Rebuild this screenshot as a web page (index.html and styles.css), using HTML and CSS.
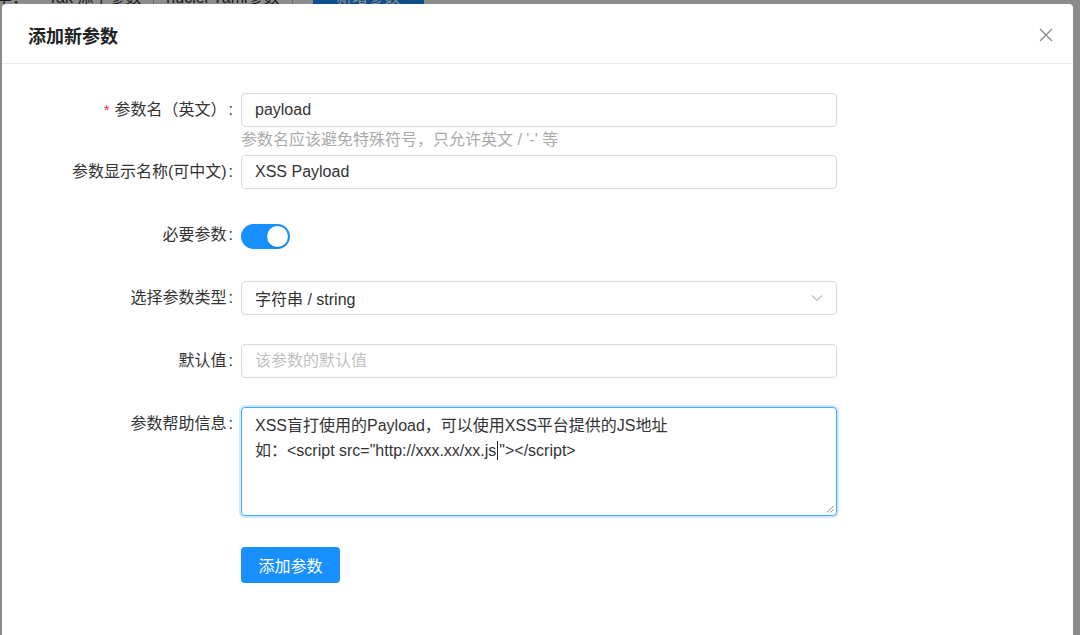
FILE: index.html
```html
<!DOCTYPE html>
<html lang="zh-CN">
<head>
    <meta charset="UTF-8">
    <meta name="viewport" content="width=device-width, initial-scale=1.0">
    <title>添加新参数</title>
    <link rel="stylesheet" href="styles.css">
</head>
<body>
    <div class="page">
        <div class="page-tabs">
            <span class="tab-lead">羊：</span>
            <span class="tab">Tak 添个参数</span>
            <span class="tab">nuclei Yaml参数</span>
            <span class="tab-btn">新增参数</span>
        </div>
    </div>

    <div class="mask"></div>

    <div class="modal">
        <div class="modal-header">
            <div class="modal-title">添加新参数</div>
            <button class="modal-close" type="button" aria-label="关闭">
                <svg width="14" height="14" viewBox="0 0 14 14">
                    <path d="M1 1 L13 13 M13 1 L1 13" stroke="#8c8c8c" stroke-width="1.4" fill="none"/>
                </svg>
            </button>
        </div>

        <div class="modal-body">
            <form class="param-form">
                <div class="form-item has-help">
                    <label class="form-label required">参数名（英文）</label>
                    <div class="form-control">
                        <input class="input" type="text" value="payload">
                        <div class="form-help">参数名应该避免特殊符号，只允许英文 / '-' 等</div>
                    </div>
                </div>

                <div class="form-item">
                    <label class="form-label">参数显示名称(可中文)</label>
                    <div class="form-control">
                        <input class="input" type="text" value="XSS Payload">
                    </div>
                </div>

                <div class="form-item switch-item">
                    <label class="form-label">必要参数</label>
                    <div class="form-control">
                        <span class="switch is-on"><span class="switch-knob"></span></span>
                    </div>
                </div>

                <div class="form-item">
                    <label class="form-label">选择参数类型</label>
                    <div class="form-control">
                        <div class="select">
                            <span class="select-value">字符串 / string</span>
                            <svg class="select-arrow" width="12" height="8" viewBox="0 0 12 8">
                                <polyline points="1,1.5 6,6.5 11,1.5" stroke="#bfbfbf" stroke-width="1.2" fill="none"/>
                            </svg>
                        </div>
                    </div>
                </div>

                <div class="form-item">
                    <label class="form-label">默认值</label>
                    <div class="form-control">
                        <input class="input" type="text" placeholder="该参数的默认值">
                    </div>
                </div>

                <div class="form-item">
                    <label class="form-label">参数帮助信息</label>
                    <div class="form-control">
                        <div class="textarea is-focused">
                            <div>XSS盲打使用的Payload，可以使用XSS平台提供的JS地址</div>
                            <div>如：&lt;script src="http://xxx.xx/xx.js<span class="caret"></span>"&gt;&lt;/script&gt;</div>
                            <svg class="resize-grip" width="8" height="8" viewBox="0 0 8 8">
                                <path d="M7.5 1 L1 7.5 M7.5 4.5 L4.5 7.5" stroke="#888" stroke-width="1" fill="none"/>
                            </svg>
                        </div>
                    </div>
                </div>

                <div class="form-item form-actions">
                    <div class="form-control">
                        <button class="btn-primary" type="button">添加参数</button>
                    </div>
                </div>
            </form>
        </div>
    </div>
</body>
</html>
```

FILE: styles.css
```css
* {
    margin: 0;
    padding: 0;
    box-sizing: border-box;
}

body {
    font-family: "Liberation Sans", "Noto Sans CJK SC", sans-serif;
    background: #fff;
    color: #333;
    height: 635px;
    overflow: hidden;
}

/* page behind the dialog, only its bottom edge peeks out */
.page-tabs {
    display: flex;
    align-items: center;
    height: 20px;
    margin-top: -14px;
    font-size: 16px;
    color: #333;
    white-space: nowrap;
}

.tab-lead {
    width: 52px;
    margin-left: -4px;
}

.tab {
    padding-right: 12px;
    margin-right: 12px;
    border-right: 1px solid #bbb;
}

.tab-btn {
    display: flex;
    align-items: center;
    justify-content: center;
    width: 111px;
    height: 28px;
    margin-left: 8px;
    background: #1890ff;
    color: #fff;
    border-radius: 4px;
}

.mask {
    position: fixed;
    top: 0;
    left: 0;
    right: 0;
    bottom: 0;
    background: rgba(0, 0, 0, 0.45);
}

.modal {
    position: absolute;
    top: 4px;
    left: 2px;
    width: 1071px;
    height: 700px;
    background: #fff;
    border-radius: 4px;
}

.modal-header {
    height: 60px;
    padding: 2px 20px 0 26px;
    display: flex;
    align-items: center;
    justify-content: space-between;
    border-bottom: 1px solid #ebebeb;
}

.modal-title {
    font-size: 18px;
    font-weight: 600;
    color: #222;
}

.modal-close {
    display: flex;
    border: none;
    background: none;
    cursor: pointer;
}

.modal-body {
    padding: 29px 24px 24px;
}

.form-item {
    display: flex;
    margin-bottom: 29px;
}

.form-item.has-help {
    margin-bottom: 4px;
}

.form-label {
    width: 215px;
    flex-shrink: 0;
    text-align: right;
    line-height: 34px;
    font-size: 16px;
    color: #333;
    white-space: nowrap;
}

.form-label::after {
    content: ":";
    margin: 0 8px 0 2px;
}

.form-label.required::before {
    content: "*";
    color: #f5222d;
    font-size: 14px;
    margin-right: 5px;
}

.form-control {
    width: 596px;
}

.input {
    display: block;
    width: 100%;
    height: 34px;
    padding: 0 13px;
    border: 1px solid #d9d9d9;
    border-radius: 4px;
    font-family: inherit;
    font-size: 16px;
    color: #333;
    outline: none;
}

.input::placeholder {
    color: #bfbfbf;
}

.form-help {
    margin-top: 2px;
    line-height: 22px;
    font-size: 16px;
    color: #aaa;
}

.switch-item .form-control {
    height: 34px;
    padding-top: 3px;
    display: flex;
    align-items: center;
}

.switch {
    position: relative;
    display: inline-block;
    width: 49px;
    height: 25px;
    border-radius: 13px;
    background: #bfbfbf;
}

.switch.is-on {
    background: #1890ff;
}

.switch-knob {
    position: absolute;
    top: 2px;
    left: 2px;
    width: 21px;
    height: 21px;
    border-radius: 50%;
    background: #fff;
    box-shadow: 0 1px 2px rgba(0, 35, 11, 0.2);
}

.switch.is-on .switch-knob {
    left: 26px;
}

.select {
    display: flex;
    align-items: center;
    justify-content: space-between;
    height: 34px;
    padding: 0 13px;
    border: 1px solid #d9d9d9;
    border-radius: 4px;
    font-size: 16px;
    color: #333;
}

.textarea {
    position: relative;
    height: 109px;
    padding: 5px 13px;
    border: 1px solid #40a9ff;
    border-radius: 4px;
    box-shadow: 0 0 0 2px rgba(24, 144, 255, 0.2);
    font-size: 16px;
    line-height: 25px;
    color: #333;
}

.caret {
    display: inline-block;
    width: 1px;
    height: 19px;
    margin: 0 1px;
    vertical-align: -4px;
    background: #222;
}

.resize-grip {
    position: absolute;
    right: 2px;
    bottom: 2px;
}

.form-actions .form-control {
    margin-left: 215px;
    padding-top: 2px;
}

.btn-primary {
    height: 36px;
    padding: 0 17.5px;
    border: none;
    border-radius: 4px;
    background: #1890ff;
    color: #fff;
    font-family: inherit;
    font-size: 16px;
    cursor: pointer;
}
```
